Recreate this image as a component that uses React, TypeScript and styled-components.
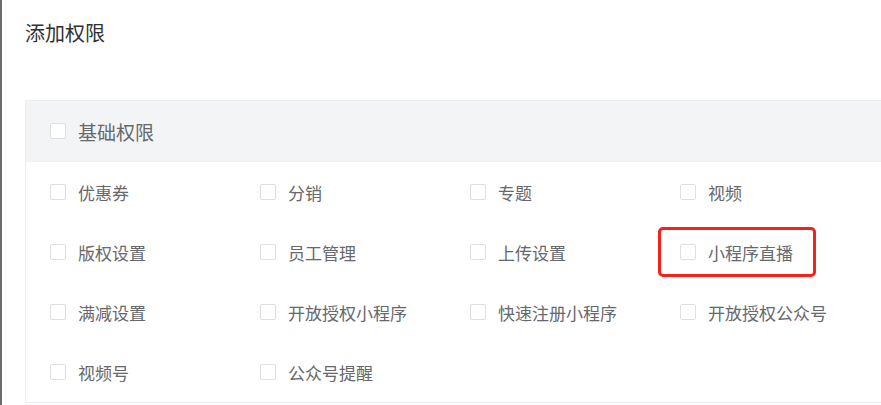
import React from "react";
import styled, { createGlobalStyle } from "styled-components";

const GlobalStyle = createGlobalStyle`
  html, body {
    margin: 0;
    padding: 0;
    background: #ffffff;
  }
  body {
    font-family: "Noto Sans CJK SC", "Noto Sans", sans-serif;
  }
`;

const Page = styled.div`
  height: 405px;
  box-sizing: border-box;
  border-left: 2px solid #6c6c6c;
  padding-left: 23px;
  overflow: hidden;
  background: #ffffff;
`;

const Title = styled.h2`
  margin: 0 0 34px;
  height: 66px;
  line-height: 66px;
  font-size: 20px;
  font-weight: 400;
  color: #303133;
`;

const Panel = styled.div`
  width: 900px;
  border: 1px solid #ebeef5;
  border-right: none;
`;

const Header = styled.div`
  display: flex;
  align-items: center;
  height: 60px;
  padding: 0 24px;
  background: #f3f4f6;
  border-bottom: 1px solid #f0f1f4;
`;

const Body = styled.div`
  display: grid;
  grid-template-columns: repeat(4, 210px);
  grid-auto-rows: 60px;
  padding: 0 24px;
`;

const Item = styled.label<{ $marked?: boolean }>`
  position: relative;
  display: flex;
  align-items: center;
  gap: 12px;
  font-size: 17px;
  color: #66686c;
  cursor: pointer;

  ${(p) =>
    p.$marked &&
    `
    &::after {
      content: "";
      position: absolute;
      left: -22px;
      top: 5px;
      bottom: 5px;
      width: 158px;
      box-sizing: border-box;
      border: 3px solid #f3221b;
      border-radius: 5px;
      pointer-events: none;
    }
  `}
`;

const HeaderItem = styled(Item)`
  font-size: 19px;
`;

const Box = styled.span`
  width: 16px;
  height: 16px;
  box-sizing: border-box;
  border: 1px solid #dcdfe6;
  border-radius: 2px;
  background: #ffffff;
  flex-shrink: 0;
`;

const permissions = [
  "优惠券",
  "分销",
  "专题",
  "视频",
  "版权设置",
  "员工管理",
  "上传设置",
  "小程序直播",
  "满减设置",
  "开放授权小程序",
  "快速注册小程序",
  "开放授权公众号",
  "视频号",
  "公众号提醒",
];

export default function App() {
  return (
    <>
      <GlobalStyle />
      <Page>
        <Title>添加权限</Title>
        <Panel>
          <Header>
            <HeaderItem>
              <Box />
              基础权限
            </HeaderItem>
          </Header>
          <Body>
            {permissions.map((name) => (
              <Item key={name} $marked={name === "小程序直播"}>
                <Box />
                {name}
              </Item>
            ))}
          </Body>
        </Panel>
      </Page>
    </>
  );
}
